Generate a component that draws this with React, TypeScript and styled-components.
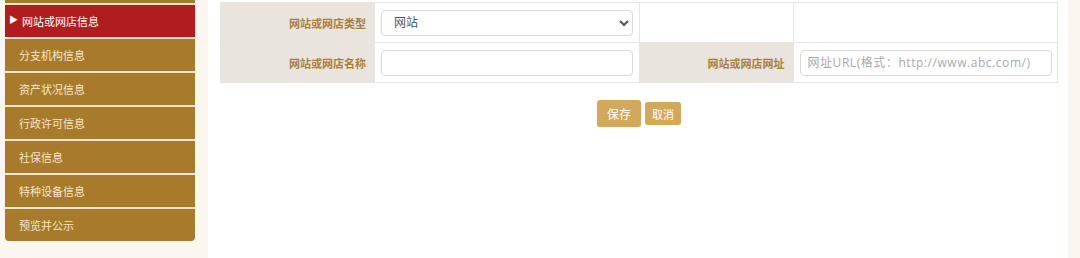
import React from "react"
import styled, { createGlobalStyle } from "styled-components"

const GlobalStyle = createGlobalStyle`
  html, body {
    margin: 0;
    padding: 0;
    background: #fbf7ee;
    font-family: "Open Sans", "Noto Sans CJK SC", sans-serif;
  }
`

const menu = [
  "网站或网店信息",
  "分支机构信息",
  "资产状况信息",
  "行政许可信息",
  "社保信息",
  "特种设备信息",
  "预览并公示",
]

const App: React.FC = () => (
  <Page>
    <GlobalStyle />
    <Sidebar>
      <MenuList>
        <MenuStub />
        {menu.map((label, i) => (
          <MenuItem key={label} $active={i === 0} $last={i === menu.length - 1}>
            {i === 0 && <Arrow>▶</Arrow>}
            {label}
          </MenuItem>
        ))}
      </MenuList>
    </Sidebar>
    <Main>
      <FormTable>
        <tbody>
          <tr>
            <LabelCell>网站或网店类型</LabelCell>
            <FieldCell>
              <SelectBox defaultValue="网站">
                <option>网站</option>
                <option>网店</option>
              </SelectBox>
            </FieldCell>
            <EmptyCell />
            <EmptyCell />
          </tr>
          <tr>
            <LabelCell>网站或网店名称</LabelCell>
            <FieldCell>
              <TextInput />
            </FieldCell>
            <LabelCell>网站或网店网址</LabelCell>
            <FieldCell>
              <TextInput placeholder="网址URL(格式：http://www.abc.com/)" />
            </FieldCell>
          </tr>
        </tbody>
      </FormTable>
      <Actions>
        <Button $big>保存</Button>
        <Button>取消</Button>
      </Actions>
    </Main>
    <RightStrip />
  </Page>
)
export default App

const Page = styled.div`
  display: flex;
  height: 258px;
  overflow: hidden;
`

const Sidebar = styled.aside`
  width: 208px;
  flex-shrink: 0;
  padding-left: 5px;
  box-sizing: border-box;
`

const MenuList = styled.div`
  width: 190px;
  display: flex;
  flex-direction: column;
  gap: 2px;
  background: #f3e6d0;
  border-radius: 0 0 4px 4px;
`

const MenuStub = styled.div`
  height: 3px;
  background: #a87b2c;
`

const MenuItem = styled.div<{ $active?: boolean; $last?: boolean }>`
  height: 32px;
  display: flex;
  align-items: center;
  padding-left: ${(p) => (p.$active ? "4px" : "14px")};
  background: ${(p) => (p.$active ? "#b11c1f" : "#a87b2c")};
  color: ${(p) => (p.$active ? "#ffffff" : "#f4e7cc")};
  font-size: 11px;
  border-radius: ${(p) => (p.$last ? "0 0 4px 4px" : "0")};
`

const Arrow = styled.span`
  font-size: 9px;
  margin-right: 4px;
  margin-top: -3px;
`

const Main = styled.main`
  flex: 1;
  background: #ffffff;
  padding: 2px 10px 0 12px;
`

const RightStrip = styled.div`
  width: 12px;
  flex-shrink: 0;
  background: #fbf7ee;
`

const FormTable = styled.table`
  width: 838px;
  border-collapse: collapse;
  table-layout: fixed;
  font-size: 11px;

  td {
    border: 1px solid #e6e6e6;
    height: 40px;
    box-sizing: border-box;
  }

  td:nth-child(1),
  td:nth-child(3) {
    width: 154px;
  }
`

const LabelCell = styled.td`
  background: #e9e5dd;
  color: #a8803d;
  font-weight: bold;
  text-align: right;
  padding: 0 8px;
`

const FieldCell = styled.td`
  padding: 0 6px;
`

const EmptyCell = styled.td``

const SelectBox = styled.select`
  width: 252px;
  height: 26px;
  border: 1px solid #d9d9d9;
  border-radius: 4px;
  background: #fff;
  color: #555;
  font-size: 12px;
  font-family: inherit;
  padding: 0 8px;
`

const TextInput = styled.input`
  width: 252px;
  height: 26px;
  box-sizing: border-box;
  border: 1px solid #d9d9d9;
  border-radius: 4px;
  font-size: 12px;
  letter-spacing: 0.55px;
  font-family: inherit;
  padding: 0 7px;

  &::placeholder {
    color: #aaa;
  }
`

const Actions = styled.div`
  display: flex;
  justify-content: center;
  align-items: center;
  gap: 4px;
  margin-top: 17px;
`

const Button = styled.button<{ $big?: boolean }>`
  height: ${(p) => (p.$big ? "27px" : "23px")};
  padding: 0 ${(p) => (p.$big ? "10px" : "7px")};
  border: none;
  border-radius: 3px;
  background: #d4a85b;
  color: #fff;
  font-size: ${(p) => (p.$big ? "12px" : "11px")};
  font-family: inherit;
`
